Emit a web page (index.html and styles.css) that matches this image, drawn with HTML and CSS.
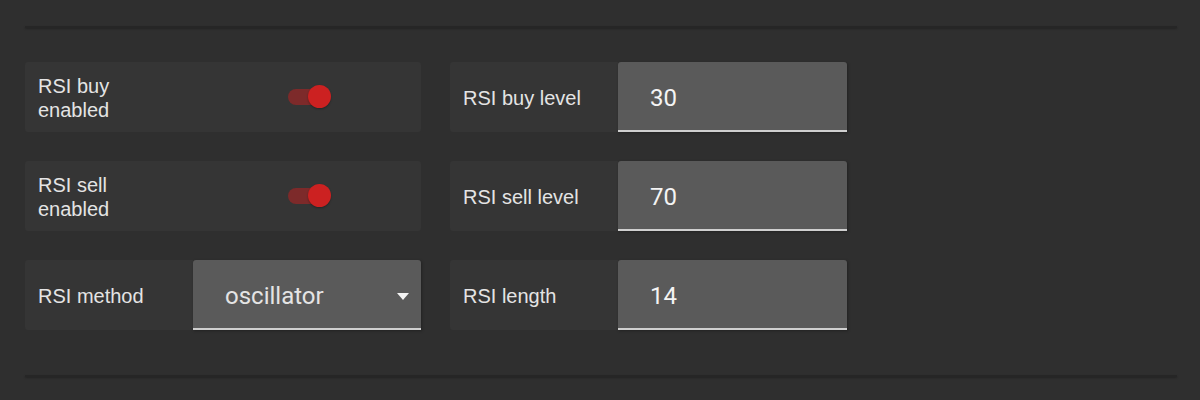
FILE: index.html
```html
<!DOCTYPE html>
<html lang="en">
<head>
  <meta charset="UTF-8" />
  <title>RSI settings</title>
  <link rel="stylesheet" href="styles.css">
</head>
<body>
  <div class="panel">
    <hr class="divider">

    <div class="fields">
      <!-- row 1 -->
      <div class="field switch-field">
        <span class="label">RSI buy<br>enabled</span>
        <label class="switch">
          <input type="checkbox" checked>
          <span class="track"></span>
          <span class="thumb"></span>
        </label>
      </div>
      <div class="field">
        <span class="label">RSI buy level</span>
        <input class="value" type="text" value="30">
      </div>

      <!-- row 2 -->
      <div class="field switch-field">
        <span class="label">RSI sell<br>enabled</span>
        <label class="switch">
          <input type="checkbox" checked>
          <span class="track"></span>
          <span class="thumb"></span>
        </label>
      </div>
      <div class="field">
        <span class="label">RSI sell level</span>
        <input class="value" type="text" value="70">
      </div>

      <!-- row 3 -->
      <div class="field">
        <span class="label">RSI method</span>
        <div class="select">
          <span>oscillator</span>
          <span class="caret"></span>
        </div>
      </div>
      <div class="field">
        <span class="label">RSI length</span>
        <input class="value" type="text" value="14">
      </div>
    </div>

    <hr class="divider">
  </div>
</body>
</html>
```

FILE: styles.css
```css
* {
  box-sizing: border-box;
  margin: 0;
  padding: 0;
}

body {
  background-color: #2f2f2f;
  font-family: 'Liberation Sans', Arial, sans-serif;
  color: #e2e2e2;
  height: 400px;
  overflow: hidden;
}

.panel {
  padding: 26px 23px 0 25px;
}

.divider {
  border: none;
  height: 2px;
  background: #262626;
  box-shadow: 0 1px 2px rgba(0,0,0,0.25);
}

.fields {
  display: grid;
  grid-template-columns: 396px 397px;
  grid-auto-rows: 70px;
  column-gap: 29px;
  row-gap: 29px;
  margin: 34px 0 45px;
}

.field {
  display: flex;
  height: 70px;
}

.label {
  width: 168px;
  flex-shrink: 0;
  display: flex;
  align-items: center;
  padding: 2px 0 0 13px;
  background: #353535;
  border-radius: 3px 0 0 3px;
  font-size: 20px;
  line-height: 24px;
  color: #e4e4e4;
}

.value,
.select {
  flex: 1;
  width: 0;
  min-width: 0;
  height: 70px;
  background: #5a5a5a;
  border: none;
  border-bottom: 2px solid #cfcfcf;
  border-radius: 3px 3px 0 0;
  box-shadow: 1px 1px 3px rgba(0,0,0,0.3);
  font-family: Roboto, 'Liberation Sans', sans-serif;
  font-size: 24px;
  color: #f4f4f4;
  padding: 4px 0 0 32px;
  outline: none;
}

.select {
  display: flex;
  align-items: center;
  justify-content: space-between;
  padding-right: 12px;
  color: #e4e4e4;
}

.caret {
  width: 0;
  height: 0;
  border-left: 6px solid transparent;
  border-right: 6px solid transparent;
  border-top: 7px solid #f4f4f4;
  margin-top: 0;
}

/* toggle row: whole card shares the label colour */
.switch-field {
  background: #353535;
  border-radius: 3px;
}

.switch-field .label {
  background: none;
}

.switch {
  position: relative;
  width: 44px;
  height: 24px;
  margin: auto 0 auto 95px;
  display: block;
}

.switch input {
  display: none;
}

.switch .track {
  position: absolute;
  left: 0;
  top: 4px;
  width: 34px;
  height: 16px;
  border-radius: 8px;
  background: #7d2a2a;
}

.switch .thumb {
  position: absolute;
  left: 20px;
  top: 0;
  width: 23px;
  height: 23px;
  border-radius: 50%;
  background: #cc2121;
  box-shadow: 0 1px 2px rgba(0,0,0,0.3);
}
```
